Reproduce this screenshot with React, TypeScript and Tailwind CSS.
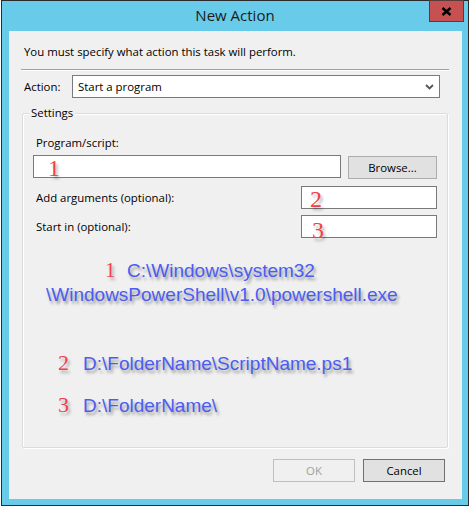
import React from "react";

const ui = { fontFamily: '"Segoe UI", "Open Sans", sans-serif' };
const arial = { fontFamily: '"Liberation Sans", Arial, sans-serif' };
const serif = { fontFamily: '"Liberation Serif", "Times New Roman", serif' };

const blueText = "text-[#4b5cf2] [text-shadow:2px_3px_3px_rgba(0,0,0,0.35)]";
const redNum = "text-[#f2404a] [text-shadow:2px_3px_3px_rgba(0,0,0,0.3)]";

function Num({ n, className = "" }: { n: string; className?: string }) {
  return (
    <span style={serif} className={`${redNum} leading-none ${className}`}>
      {n}
    </span>
  );
}

function Field({ w, children }: { w: string; children?: React.ReactNode }) {
  return (
    <div className={`${w} h-[23px] bg-white border border-[#7a7a7a] flex items-center overflow-visible`}>
      {children}
    </div>
  );
}

export default function App() {
  return (
    <div className="w-[470px] h-[507px] bg-white pl-px" style={ui}>
      {/* window */}
      <div className="w-[468px] h-[506px] border border-[#2b2b2b] bg-[#69cbea] flex flex-col">
        {/* title bar */}
        <div className="relative h-[30px] flex items-center justify-center text-[15px] text-[#1b1b1b] pb-[2px]">
          New Action
          <div className="absolute right-[4px] top-[-1px] w-[35px] h-[22px] bg-[#c75050] border border-[#5a3b3b] flex items-center justify-center">
            <svg width="11" height="9" viewBox="0 0 11 9">
              <path d="M1.5 1 L9.5 8 M9.5 1 L1.5 8" stroke="#000" strokeWidth="2.4" />
            </svg>
          </div>
        </div>

        {/* client area */}
        <div className="ml-[7px] w-[453px] h-[468px] bg-[#f0f0f0] text-[11.4px] text-black flex flex-col">
          <p className="pl-[15px] pt-[13px] h-[38px] leading-[16px]">
            You must specify what action this task will perform.
          </p>
          <div className="ml-[12px] w-[428px] border-t border-[#a0a0a0] border-b border-b-white" />

          {/* action row */}
          <div className="mt-[4px] flex items-center h-[23px]">
            <span className="pl-[15px] w-[63px]">Action:</span>
            <div className="w-[368px] h-[23px] bg-white border border-[#7a7a7a] flex items-center justify-between pl-[5px] pr-[5px]">
              <span>Start a program</span>
              <svg width="9" height="6" viewBox="0 0 9 6">
                <path d="M1 1 L4.5 4.5 L8 1" stroke="#555" strokeWidth="1.8" fill="none" />
              </svg>
            </div>
          </div>

          {/* settings group */}
          <div className="relative mt-[15px] ml-[13px] w-[426px] h-[335px] border border-[#dcdcdc] shadow-[inset_1px_1px_0_#fff,1px_1px_0_#fff] rounded-[2px] flex flex-col">
            <span className="absolute left-[6px] top-[-9px] bg-[#f0f0f0] px-[2px] leading-[16px]">Settings</span>

            <div className="pl-[13px] pt-[21px] h-[41px] leading-[16px]">Program/script:</div>
            <div className="flex items-start h-[24px]">
              <div className="ml-[10px]">
                <Field w="w-[308px]">
                  <Num n="1" className="ml-[14px] mt-[3px] text-[24px]" />
                </Field>
              </div>
              <button className="ml-[7px] mt-[1px] w-[89px] h-[23px] bg-[#e1e1e1] border border-[#adadad]" style={ui}>
                Browse...
              </button>
            </div>

            <div className="mt-[7px] flex items-center justify-between pr-[10px]">
              <span className="pl-[13px]">Add arguments (optional):</span>
              <Field w="w-[136px]">
                <Num n="2" className="ml-[8px] mt-[3px] text-[24px]" />
              </Field>
            </div>
            <div className="mt-[6px] flex items-center justify-between pr-[10px]">
              <span className="pl-[13px]">Start in (optional):</span>
              <Field w="w-[136px]">
                <Num n="3" className="ml-[10px] mt-[6px] text-[24px]" />
              </Field>
            </div>

            {/* notes */}
            <div className="mt-[21px] flex flex-col text-[19px] leading-[24px]" style={arial}>
              <div className="h-[24px] flex items-baseline pl-[82px]">
                <Num n="1" className="w-[22px] text-[21px]" />
                <span className={blueText}>C:\Windows\system32</span>
              </div>
              <div className={`h-[24px] pl-[23px] ${blueText}`}>\WindowsPowerShell\v1.0\powershell.exe</div>

              <div className="mt-[45px] h-[24px] flex items-baseline pl-[35px]">
                <Num n="2" className="w-[25px] text-[22px]" />
                <span className={blueText}>D:\FolderName\ScriptName.ps1</span>
              </div>
              <div className="mt-[18px] h-[24px] flex items-baseline pl-[35px]">
                <Num n="3" className="w-[25px] text-[22px]" />
                <span className={blueText}>D:\FolderName\</span>
              </div>
            </div>
          </div>

          {/* buttons */}
          <div className="mt-[11px] flex justify-end gap-[8px] pr-[17px]">
            <button className="w-[82px] h-[23px] border border-[#bfbfbf] bg-[#f0f0f0] text-[#a0a0a0]" style={ui}>
              OK
            </button>
            <button className="w-[82px] h-[23px] border border-[#707070] bg-[#e1e1e1]" style={ui}>
              Cancel
            </button>
          </div>
        </div>
      </div>
    </div>
  );
}
